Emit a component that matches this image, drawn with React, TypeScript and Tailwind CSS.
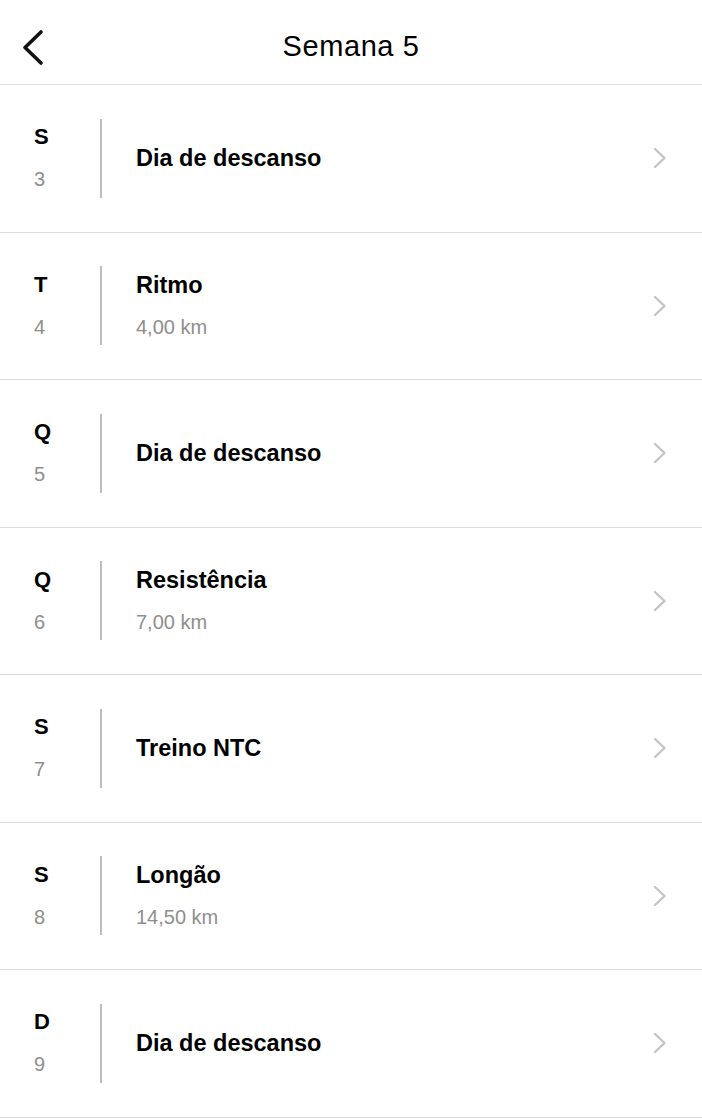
const days = [
  { letter: 'S', day: 3, title: 'Dia de descanso' },
  { letter: 'T', day: 4, title: 'Ritmo', distance: '4,00 km' },
  { letter: 'Q', day: 5, title: 'Dia de descanso' },
  { letter: 'Q', day: 6, title: 'Resistência', distance: '7,00 km' },
  { letter: 'S', day: 7, title: 'Treino NTC' },
  { letter: 'S', day: 8, title: 'Longão', distance: '14,50 km' },
  { letter: 'D', day: 9, title: 'Dia de descanso' },
]

function ChevronRight() {
  return (
    <svg width="16" height="22" viewBox="0 0 16 22" fill="none" className="shrink-0">
      <path d="M3 2 L12.5 11 L3 20" stroke="#c4c4c4" strokeWidth="2.4" strokeLinecap="round" strokeLinejoin="round" />
    </svg>
  )
}

export default function App() {
  return (
    <div className="w-[702px] min-h-[1118px] bg-white text-black font-['Liberation_Sans',Arial,sans-serif]">
      {/* Header */}
      <header className="h-[85px] border-b border-[#e2e2e2] flex items-center relative">
        <button className="absolute left-[20px] top-[29px]">
          <svg width="26" height="38" viewBox="0 0 26 38" fill="none">
            <path d="M21 3 L5 18.5 L21 34" stroke="#111" strokeWidth="3.6" strokeLinecap="round" strokeLinejoin="round" />
          </svg>
        </button>
        <h1 className="w-full text-center text-[29px] tracking-[0.02em] leading-none mt-[8px]">Semana 5</h1>
      </header>

      {/* Days */}
      {days.map((d, i) => (
        <div key={i} className="h-[147.5px] border-b border-[#dcdcdc] flex items-center">
          <div className="w-[100px] pl-[34px] flex flex-col">
            <span className="text-[22px] font-bold leading-[28px]">{d.letter}</span>
            <span className="text-[20px] text-[#8e8e8e] leading-[28px] mt-[14px]">{d.day}</span>
          </div>
          <div className="w-[2px] h-[79px] bg-[#bdbdbd]" />
          <div className="flex-1 pl-[34px] flex flex-col">
            <span className="text-[23.5px] font-bold leading-[28px]">{d.title}</span>
            {d.distance && (
              <span className="text-[20px] text-[#8e8e8e] leading-[28px] mt-[14px]">{d.distance}</span>
            )}
          </div>
          <div className="pr-[34px]">
            <ChevronRight />
          </div>
        </div>
      ))}
    </div>
  )
}
